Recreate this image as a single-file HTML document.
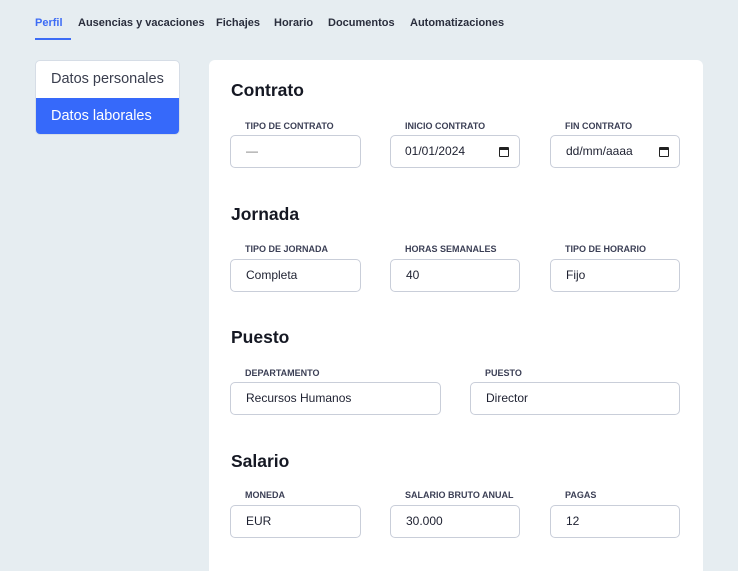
<!DOCTYPE html>
<html><head><meta charset="utf-8"><style>
*{box-sizing:border-box;margin:0;padding:0}
html,body{width:738px;height:571px;overflow:hidden}
body{background:#e6edf1;font-family:"Liberation Sans",sans-serif;position:relative;color:#1d2030}
.tab{position:absolute;top:17px;font-size:11px;font-weight:bold;color:#2a2e3d;white-space:nowrap}
.ul{position:absolute;left:35px;top:38px;width:36px;height:2px;background:#3d6cf5}
.side{position:absolute;left:35px;top:60px;width:145px;height:75px;border:1px solid #d6dde6;border-radius:5px;background:#fff;overflow:hidden}
.side div{height:37px;line-height:36px;padding-left:15px;font-size:14.5px;color:#3a3e4e}
.side .act{background:#3669fa;color:#fff;height:38px}
.card{position:absolute;left:209px;top:60px;width:494px;height:511px;background:#fff;border-radius:6px 6px 0 0}
h2{position:absolute;left:231px;font-size:17.5px;font-weight:bold;color:#151823}
.lb{position:absolute;font-size:9px;font-weight:bold;color:#3b3f55;text-transform:uppercase}
.in{position:absolute;height:33px;border:1px solid #c9ced9;border-radius:5px;font-size:12px;line-height:31px;padding-left:15px;color:#1d2030}
.cal{position:absolute;right:10px;top:11px;width:10px;height:10px;border:1.5px solid #222;border-top-width:3px;border-radius:1px}
</style></head><body>
<div class="tab" style="left:35px;color:#3d6cf5">Perfil</div>
<div class="tab" style="left:78px">Ausencias y vacaciones</div>
<div class="tab" style="left:216px">Fichajes</div>
<div class="tab" style="left:274px">Horario</div>
<div class="tab" style="left:328px">Documentos</div>
<div class="tab" style="left:410px">Automatizaciones</div>
<div class="ul"></div>
<div class="side"><div>Datos personales</div><div class="act">Datos laborales</div></div>
<div class="card"></div>

<h2 style="top:80px">Contrato</h2>
<div class="lb" style="left:245px;top:121px">Tipo de contrato</div>
<div class="lb" style="left:405px;top:121px">Inicio contrato</div>
<div class="lb" style="left:565px;top:121px">Fin contrato</div>
<div class="in" style="left:230px;top:135px;width:131px;color:#777">—</div>
<div class="in" style="left:390px;top:135px;width:130px;padding-left:14px">01/01/2024<span class="cal"></span></div>
<div class="in" style="left:550px;top:135px;width:130px;padding-left:15px">dd/mm/aaaa<span class="cal"></span></div>

<h2 style="top:204px">Jornada</h2>
<div class="lb" style="left:245px;top:244px">Tipo de jornada</div>
<div class="lb" style="left:405px;top:244px">Horas semanales</div>
<div class="lb" style="left:565px;top:244px">Tipo de horario</div>
<div class="in" style="left:230px;top:259px;width:131px">Completa</div>
<div class="in" style="left:390px;top:259px;width:130px">40</div>
<div class="in" style="left:550px;top:259px;width:130px">Fijo</div>

<h2 style="top:327px">Puesto</h2>
<div class="lb" style="left:245px;top:368px">Departamento</div>
<div class="lb" style="left:485px;top:368px">Puesto</div>
<div class="in" style="left:230px;top:382px;width:211px">Recursos Humanos</div>
<div class="in" style="left:470px;top:382px;width:210px">Director</div>

<h2 style="top:451px">Salario</h2>
<div class="lb" style="left:245px;top:490px">Moneda</div>
<div class="lb" style="left:405px;top:490px">Salario bruto anual</div>
<div class="lb" style="left:565px;top:490px">Pagas</div>
<div class="in" style="left:230px;top:505px;width:131px">EUR</div>
<div class="in" style="left:390px;top:505px;width:130px">30.000</div>
<div class="in" style="left:550px;top:505px;width:130px">12</div>
</body></html>
